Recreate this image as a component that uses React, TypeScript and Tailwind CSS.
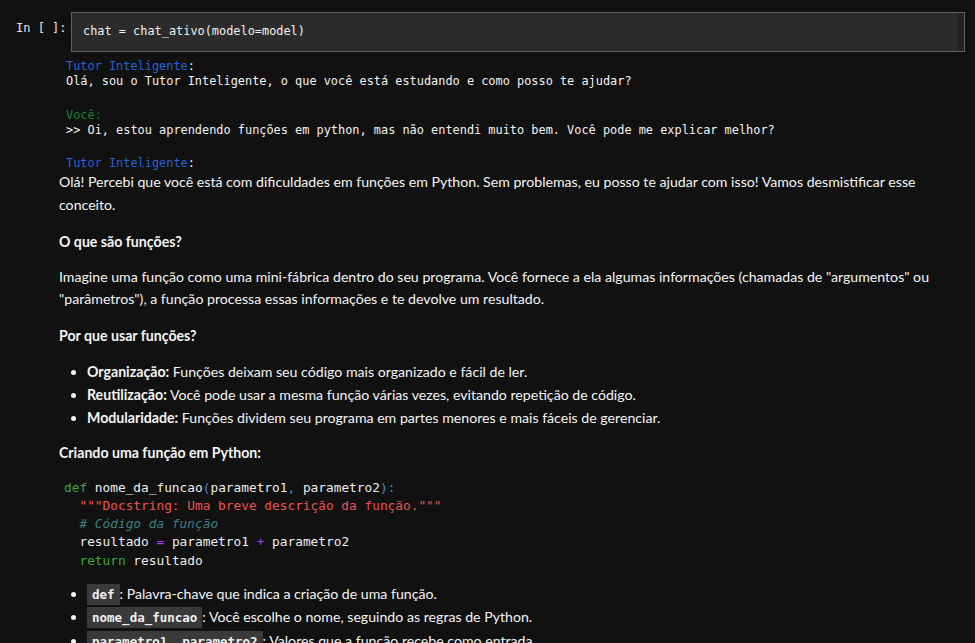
import type React from "react";

const mono = "font-['Consolas','DejaVu_Sans_Mono',monospace]";
const sans = "font-['Lato','Open_Sans',sans-serif]";

function Chip({ children }: { children: React.ReactNode }) {
  return (
    <code
      className={`${mono} bg-[#3a3a3a] px-[5px] py-[3px] text-[12.5px] font-semibold text-[#f0f0f0]`}
    >
      {children}
    </code>
  );
}

export default function App() {
  return (
    <div className="min-h-screen w-full overflow-hidden bg-[#111111] text-[#f2f2f2]">
      {/* Input cell */}
      <div className="flex items-start pt-3">
        <div className={`${mono} w-[71px] pl-4 pt-[7px] text-[12px] text-[#e6e6e6]`}>
          In [ ]:
        </div>
        <div className="flex h-[40px] w-[894px] border border-[#626262] bg-[#2b2b2b]">
          <div className={`${mono} flex-1 pl-[11px] pt-[11px] text-[11.9px] leading-[15px] text-[#f0f0f0]`}>
            chat = chat_ativo(modelo=model)
          </div>
          <div className="w-[6px] bg-[#232323]" />
        </div>
      </div>

      {/* Output area */}
      <div className="pl-[59px] pr-[10px]">
        <pre className={`${mono} mt-[7px] pl-[7px] text-[11.9px] leading-[15px] text-[#f2f2f2]`}>
          <span className="text-[#2563d6]">Tutor Inteligente</span>:{"\n"}
          Olá, sou o Tutor Inteligente, o que você está estudando e como posso te ajudar?
        </pre>
        <pre className={`${mono} mt-[19px] pl-[7px] text-[11.9px] leading-[15px] text-[#f2f2f2]`}>
          <span className="text-[#1c7f34]">Você:</span>{"\n"}
          {">> Oi, estou aprendendo funções em python, mas não entendi muito bem. Você pode me explicar melhor?"}
        </pre>
        <pre className={`${mono} mt-[18px] pl-[7px] text-[11.9px] leading-[15px] text-[#f2f2f2]`}>
          <span className="text-[#2563d6]">Tutor Inteligente</span>:
        </pre>

        {/* Markdown answer */}
        <div className={`${sans} text-[14.15px] leading-[22.5px] text-[#f4f4f4]`}>
          <p>
            Olá! Percebi que você está com dificuldades em funções em Python. Sem problemas, eu posso te ajudar com isso! Vamos desmistificar esse conceito.
          </p>
          <p className="mt-[15px] font-bold">O que são funções?</p>
          <p className="mt-[12px]">
            Imagine uma função como uma mini-fábrica dentro do seu programa. Você fornece a ela algumas informações (chamadas de "argumentos" ou "parâmetros"), a função processa essas informações e te devolve um resultado.
          </p>
          <p className="mt-[14px] font-bold">Por que usar funções?</p>
          <ul className="mt-[13px] list-disc pl-[28px] leading-[23px]">
            <li>
              <b>Organização:</b> Funções deixam seu código mais organizado e fácil de ler.
            </li>
            <li>
              <b>Reutilização:</b> Você pode usar a mesma função várias vezes, evitando repetição de código.
            </li>
            <li>
              <b>Modularidade:</b> Funções dividem seu programa em partes menores e mais fáceis de gerenciar.
            </li>
          </ul>
          <p className="mt-[13px] font-bold">Criando uma função em Python:</p>

          <pre className={`${mono} mt-[14px] pl-[5px] text-[12.8px] leading-[18.3px] text-[#ededed]`}>
            <span className="text-[#3fa33f]">def</span> nome_da_funcao<span className="text-[#3b8fdc]">(</span>parametro1<span className="text-[#3b8fdc]">,</span> parametro2<span className="text-[#3b8fdc]">):</span>{"\n"}
            {"  "}<span className="text-[#ec5252]">"""Docstring: Uma breve descrição da função."""</span>{"\n"}
            {"  "}<span className="italic text-[#3d7f80]"># Código da função</span>{"\n"}
            {"  "}resultado <span className="text-[#a63ef0]">=</span> parametro1 <span className="text-[#a63ef0]">+</span> parametro2{"\n"}
            {"  "}<span className="text-[#3fa33f]">return</span> resultado
          </pre>

          <ul className="mt-[13px] list-disc pl-[28px]">
            <li>
              <Chip>def</Chip>: Palavra-chave que indica a criação de uma função.
            </li>
            <li>
              <Chip>nome_da_funcao</Chip>: Você escolhe o nome, seguindo as regras de Python.
            </li>
            <li>
              <Chip>parametro1, parametro2</Chip>: Valores que a função recebe como entrada.
            </li>
          </ul>
        </div>
      </div>
    </div>
  );
}
